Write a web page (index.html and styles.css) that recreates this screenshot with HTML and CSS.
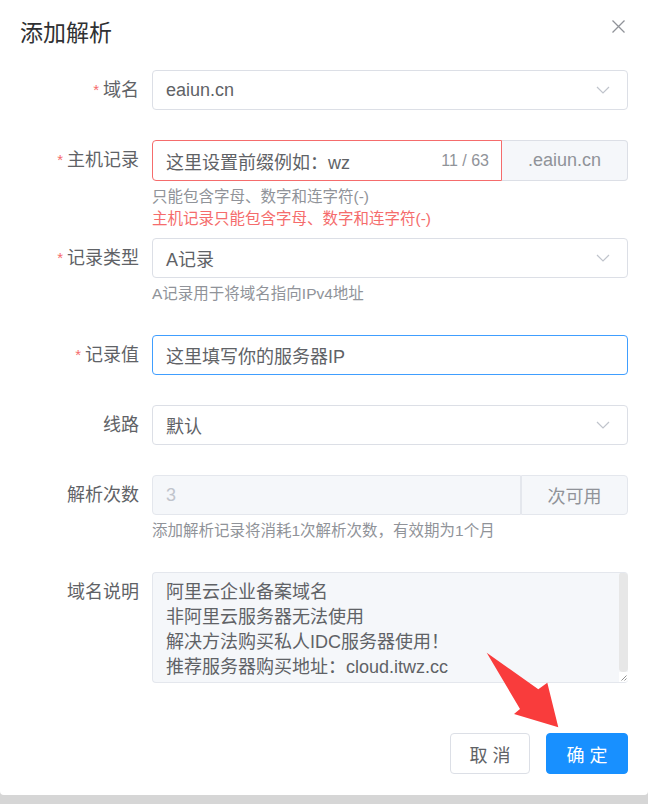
FILE: index.html
```html
<!DOCTYPE html>
<html lang="zh-CN">
<head>
<meta charset="utf-8">
<title>添加解析</title>
<link rel="stylesheet" href="styles.css">
</head>
<body>
<div class="dialog">
  <div class="header">
    <span class="title">添加解析</span>
    <span class="close">
      <svg width="13" height="13" viewBox="0 0 13 13"><path d="M0.5 0.5 L12.5 12.5 M12.5 0.5 L0.5 12.5" stroke="#909399" stroke-width="1.3" fill="none"/></svg>
    </span>
  </div>
  <div class="body">
    <div class="item">
      <div class="label"><span class="star">*</span>域名</div>
      <div class="content">
        <div class="control select"><span class="value">eaiun.cn</span>
          <svg class="chev" width="14" height="8" viewBox="0 0 14 8"><path d="M1 1 L7 7 L13 1" stroke="#c0c4cc" stroke-width="1.2" fill="none"/></svg>
        </div>
      </div>
    </div>

    <div class="item">
      <div class="label"><span class="star">*</span>主机记录</div>
      <div class="content">
        <div class="group">
          <div class="control input error"><span class="value">这里设置前缀例如：wz</span><span class="count">11 / 63</span></div>
          <div class="append">.eaiun.cn</div>
        </div>
        <div class="help">只能包含字母、数字和连字符(-)</div>
        <div class="err">主机记录只能包含字母、数字和连字符(-)</div>
      </div>
    </div>

    <div class="item">
      <div class="label"><span class="star">*</span>记录类型</div>
      <div class="content">
        <div class="control select"><span class="value">A记录</span>
          <svg class="chev" width="14" height="8" viewBox="0 0 14 8"><path d="M1 1 L7 7 L13 1" stroke="#c0c4cc" stroke-width="1.2" fill="none"/></svg>
        </div>
        <div class="help">A记录用于将域名指向IPv4地址</div>
      </div>
    </div>

    <div class="item">
      <div class="label"><span class="star">*</span>记录值</div>
      <div class="content">
        <div class="control input focus"><span class="value">这里填写你的服务器IP</span></div>
      </div>
    </div>

    <div class="item">
      <div class="label">线路</div>
      <div class="content">
        <div class="control select"><span class="value">默认</span>
          <svg class="chev" width="14" height="8" viewBox="0 0 14 8"><path d="M1 1 L7 7 L13 1" stroke="#c0c4cc" stroke-width="1.2" fill="none"/></svg>
        </div>
      </div>
    </div>

    <div class="item">
      <div class="label">解析次数</div>
      <div class="content">
        <div class="group">
          <div class="control input disabled"><span class="value">3</span></div>
          <div class="append narrow">次可用</div>
        </div>
        <div class="help">添加解析记录将消耗1次解析次数，有效期为1个月</div>
      </div>
    </div>

    <div class="item">
      <div class="label">域名说明</div>
      <div class="content">
        <div class="textarea">
          <div class="ta-text">阿里云企业备案域名<br>非阿里云服务器无法使用<br>解决方法购买私人IDC服务器使用！<br>推荐服务器购买地址：cloud.itwz.cc</div>
          <div class="ta-bar">
            <div class="ta-thumb"></div>
            <div class="ta-corner"><svg width="9" height="10" viewBox="0 0 9 10"><path d="M7.5 3.5 L2.5 8.5 M7.5 6.5 L5.5 8.5" stroke="#777" stroke-width="0.8" fill="none"/></svg></div>
          </div>
        </div>
      </div>
    </div>
  </div>
  <div class="footer">
    <button class="btn">取 消</button>
    <button class="btn primary">确 定</button>
  </div>
  <svg class="arrow" width="90" height="95" viewBox="0 0 90 95"><polygon points="6.7,7.7 58.3,44.3 67.3,37.7 78.3,82.3 34,69 40,64" fill="#f93c3c"/></svg>
</div>
</body>
</html>
```
FILE: styles.css
```css
html, body {
  margin: 0;
  padding: 0;
}
body {
  background: #d6d6d6;
  width: 648px;
  height: 804px;
  overflow: hidden;
  font-family: "Liberation Sans", "Noto Sans CJK SC", sans-serif;
}
.dialog {
  position: relative;
  background: #fff;
  height: 795px;
  border-radius: 0 0 4px 4px;
  box-sizing: border-box;
}
.header {
  display: flex;
  justify-content: space-between;
  align-items: flex-start;
  padding: 19px 23px 0 20px;
}
.title {
  font-size: 23px;
  line-height: 28px;
  color: #303133;
}
.close {
  display: block;
  width: 13px;
  height: 13px;
  margin-top: 1px;
}
.close svg { display: block; }
.body {
  padding: 23px 20px 0 20px;
}
.item {
  display: flex;
  margin-bottom: 30px;
}
.label {
  width: 132px;
  flex: none;
  box-sizing: border-box;
  padding-right: 13px;
  text-align: right;
  font-size: 18px;
  line-height: 40px;
  color: #606266;
}
.star {
  color: #f56c6c;
  font-size: 15px;
  margin-right: 4px;
  vertical-align: 1px;
}
.content {
  flex: 1;
  position: relative;
  min-width: 0;
}
.control {
  height: 40px;
  box-sizing: border-box;
  border: 1px solid #dcdfe6;
  border-radius: 4px;
  display: flex;
  align-items: center;
  padding: 0 17px 0 13px;
  font-size: 18px;
  color: #606266;
  background: #fff;
}
.value { flex: 1; white-space: nowrap; }
.chev { display: block; flex: none; }
.group {
  display: flex;
}
.group .control {
  flex: 1;
  border-radius: 4px 0 0 4px;
}
.control.error {
  border-color: #f56c6c;
  height: 41px;
  padding-right: 12px;
}
.count {
  font-size: 16px;
  color: #909399;
}
.control.focus {
  border-color: #409eff;
}
.control.disabled {
  background: #f5f7fa;
  border-color: #e4e7ed;
  color: #c0c4cc;
}
.append {
  width: 126px;
  flex: none;
  box-sizing: border-box;
  background: #f5f7fa;
  border: 1px solid #dcdfe6;
  border-left: none;
  border-radius: 0 4px 4px 0;
  color: #909399;
  font-size: 18px;
  display: flex;
  align-items: center;
  justify-content: center;
}
.append.narrow {
  width: 107px;
  border-left: 1px solid #e4e7ed;
  border-color: #e4e7ed;
}
.help {
  margin-top: 5px;
  font-size: 15.5px;
  line-height: 22px;
  color: #909399;
}
.err {
  position: absolute;
  top: 100%;
  left: 0;
  font-size: 15.5px;
  line-height: 22px;
  color: #f56c6c;
}
.textarea {
  height: 111px;
  box-sizing: border-box;
  border: 1px solid #e4e7ed;
  border-right: none;
  border-radius: 4px;
  background: #f5f7fa;
  display: flex;
  overflow: hidden;
}
.ta-text {
  flex: 1;
  padding: 7px 13px 0;
  font-size: 18px;
  line-height: 25px;
  color: #606266;
  white-space: nowrap;
}
.ta-bar {
  width: 9px;
  flex: none;
  display: flex;
  flex-direction: column;
  margin-top: -1px;
  margin-bottom: -1px;
}
.ta-thumb {
  flex: 1;
  background: #e7e7e7;
  border-radius: 4px;
}
.ta-corner {
  height: 11px;
  background: #fff;
  flex: none;
}
.ta-corner svg { display: block; }
.footer {
  display: flex;
  justify-content: flex-end;
  gap: 16px;
  padding: 20px 20px 21px;
  margin-top: 20px;
}
.btn {
  height: 41px;
  box-sizing: border-box;
  padding: 0;
  border: 1px solid #dcdfe6;
  border-radius: 4px;
  background: #fff;
  color: #606266;
  font-family: "Liberation Sans", "Noto Sans CJK SC", sans-serif;
  font-size: 18px;
  width: 80px;
  white-space: nowrap;
  text-align: center;
}
.btn.primary {
  width: 82px;
  background: #1890ff;
  border-color: #1890ff;
  color: #fff;
}
.arrow {
  position: absolute;
  left: 480px;
  top: 645px;
}
```
